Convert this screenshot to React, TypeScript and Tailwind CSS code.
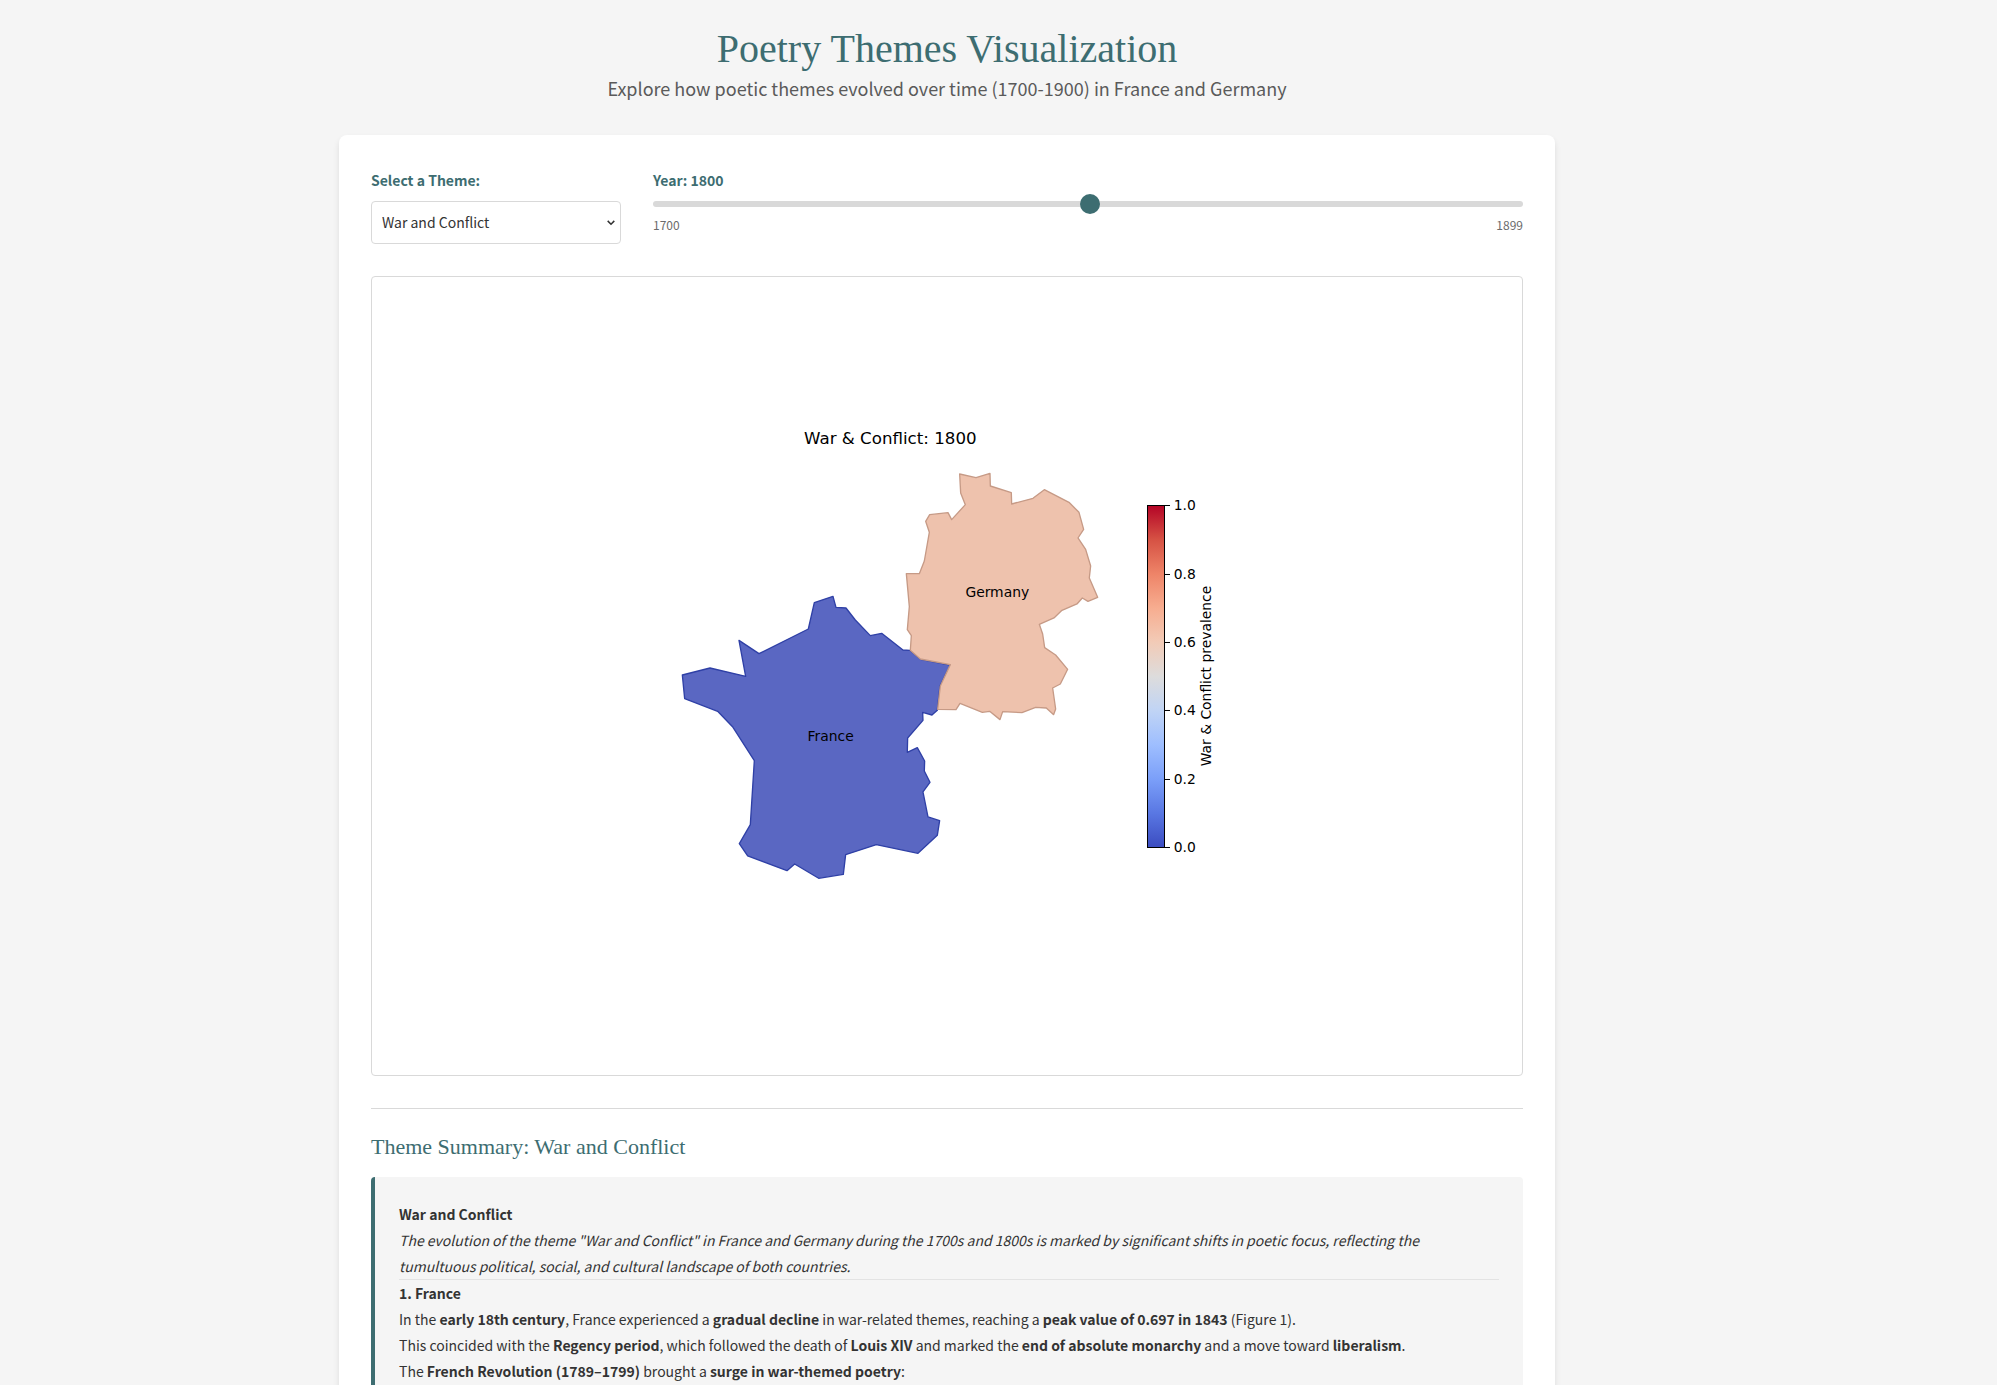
import { useState } from 'react';

const TICKS = [
  { label: '1.0', y: 79 },
  { label: '0.8', y: 148 },
  { label: '0.6', y: 216 },
  { label: '0.4', y: 284 },
  { label: '0.2', y: 353 },
  { label: '0.0', y: 421 },
];

const COOLWARM = [
  '#b40426', '#d65244', '#ee8468', '#f7ad90', '#f2cbb7', '#dddcdc',
  '#c0d4f5', '#9ebeff', '#7b9ff9', '#5977e3', '#3b4cc0',
];

const FRANCE =
  'M519 109 L528 142 L558 144 L586 180 L631 227 L665 220 L729 270 L750 271 L782 298 L871 315 L840 378 L832 451 L816 465 L788 457 L789 481 L743 534 L742 577 L772 563 L794 603 L793 633 L810 667 L789 696 L804 771 L839 782 L832 826 L774 880 L649 854 L557 884 L550 943 L476 955 L404 912 L381 932 L263 888 L238 851 L271 794 L283 602 L219 502 L173 454 L74 416 L67 345 L150 324 L257 349 L237 241 L297 281 L445 207 L463 128 Z';

const GERMANY =
  'M239 42 L288 53 L330 40 L331 78 L394 98 L395 132 L459 115 L493 89 L567 127 L597 157 L611 208 L594 234 L617 268 L632 318 L628 354 L653 412 L624 424 L607 414 L591 432 L546 451 L522 474 L478 493 L488 522 L494 563 L527 585 L563 628 L541 672 L518 684 L527 747 L521 764 L499 744 L467 742 L426 758 L368 755 L360 779 L329 754 L307 757 L240 730 L228 749 L173 748 L181 678 L211 614 L121 597 L91 571 L94 527 L82 509 L88 440 L79 341 L118 341 L133 303 L148 217 L137 184 L149 164 L204 158 L215 179 L256 134 L242 99 Z';

// The drawing is laid out in points (100 dpi); shapes are stored in pixels.
const PT = 0.72;

function ThemeMap() {
  return (
    <svg
      viewBox="0 0 417.6 360"
      className="h-[500px] w-[580px] font-['DejaVu_Sans',sans-serif]"
      role="img"
      aria-label="Theme prevalence map"
    >
      <defs>
        <linearGradient id="coolwarm" x1="0" y1="0" x2="0" y2="1">
          {COOLWARM.map((color, i) => (
            <stop key={color} offset={i / 10} stopColor={color} />
          ))}
        </linearGradient>
      </defs>
      <g transform={`scale(${PT})`}>
        <g strokeLinejoin="round" strokeWidth="4">
          <path d={FRANCE} transform="translate(3 134) scale(0.3333)" fill="#5a67c2" stroke="#2f40a6" />
          <path d={GERMANY} transform="translate(223 34) scale(0.3333)" fill="#eec2ad" stroke="#c69a86" />
        </g>
        <rect x="490.5" y="79.5" width="17" height="342" fill="url(#coolwarm)" stroke="#000" />
        {TICKS.map(({ label, y }) => (
          <path key={label} d={`M508 ${y + 0.5}h5`} stroke="#000" />
        ))}
      </g>
      <text x="168" y="13" textAnchor="middle" fontSize="12">War &amp; Conflict: 1800</text>
      <g fontSize="10">
        <text x="125" y="227" textAnchor="middle">France</text>
        <text x="245" y="123" textAnchor="middle">Germany</text>
        {TICKS.map(({ label, y }) => (
          <text key={label} x="372" y={(y + 5) * PT}>{label}</text>
        ))}
        <text transform="translate(399 180) rotate(-90)" textAnchor="middle">
          War &amp; Conflict prevalence
        </text>
      </g>
    </svg>
  );
}

export default function App() {
  const [year, setYear] = useState(1800);
  return (
    <div className="min-h-screen bg-[#f5f5f5] pr-[103px] font-['Noto_Sans_CJK_SC',sans-serif] text-[14px] leading-[26px] text-[#333]">
      <div className="mx-auto max-w-[1280px] px-8 pt-[25px]">
        <header className="mb-[31px] text-center">
          <h1 className="font-['Liberation_Serif',serif] text-[40px] leading-[48px] text-[#3d6d71]">
            Poetry Themes Visualization
          </h1>
          <p className="text-[18px] leading-[31px] text-[#5a5a5a]">
            Explore how poetic themes evolved over time (1700-1900) in France and Germany
          </p>
        </header>

        <main className="rounded-lg bg-white p-8 shadow-[0_4px_6px_rgba(0,0,0,0.1)]">
          <div className="mb-8 flex gap-8">
            <div className="w-[250px]">
              <label htmlFor="theme" className="mb-2 block font-bold text-[#3d6d71]">Select a Theme:</label>
              <div className="relative">
                <select
                  id="theme"
                  defaultValue="war"
                  className="block h-[43px] w-full appearance-none rounded border border-[#d9d9d9] bg-white px-[10px] pb-[2px] text-[14px]"
                >
                  <option value="war">War and Conflict</option>
                </select>
                <svg
                  viewBox="0 0 8 6"
                  className="pointer-events-none absolute top-[19px] right-[6px] h-[6px] w-2"
                  fill="none"
                  stroke="#333"
                  strokeWidth="1.5"
                  aria-hidden="true"
                >
                  <path d="M0.7 0.9 L4 4.2 L7.3 0.9" />
                </svg>
              </div>
            </div>
            <div className="flex-1">
              <label htmlFor="year" className="mb-2 block font-bold text-[#3d6d71]">Year: {year}</label>
              <input
                id="year"
                type="range"
                min={1700}
                max={1899}
                value={year}
                onChange={(e) => setYear(Number(e.target.value))}
                className="block h-[6px] w-full appearance-none rounded-[3px] bg-[#d9d9d9] [&::-webkit-slider-thumb]:size-5 [&::-webkit-slider-thumb]:appearance-none [&::-webkit-slider-thumb]:rounded-full [&::-webkit-slider-thumb]:bg-[#3d6d71]"
              />
              <div className="mt-2 flex justify-between text-[12px] leading-5 text-[#6b6b6b]">
                <span>1700</span>
                <span>1899</span>
              </div>
            </div>
          </div>

          <div className="flex h-[800px] items-center justify-center rounded border border-[#d9d9d9]">
            <ThemeMap />
          </div>

          <section className="mt-8 border-t border-[#d9d9d9] pt-6">
            <h2 className="mb-4 font-['Liberation_Serif',serif] text-[22px] leading-[28px] text-[#3d6d71]">
              Theme Summary: War and Conflict
            </h2>
            <div className="rounded border-l-4 border-[#3d6d71] bg-[#f5f5f5] p-6">
              <p><strong>War and Conflict</strong></p>
              <p className="max-w-[1060px] italic">
                The evolution of the theme "War and Conflict" in France and Germany during the 1700s and 1800s is marked by significant shifts in poetic focus, reflecting the tumultuous political, social, and cultural landscape of both countries.
              </p>
              <hr className="border-[#e3e3e3]" />
              <p><strong>1. France</strong></p>
              <p>
                In the <strong>early 18th century</strong>, France experienced a <strong>gradual decline</strong> in war-related themes, reaching a <strong>peak value of 0.697 in 1843</strong> (Figure 1).
              </p>
              <p>
                This coincided with the <strong>Regency period</strong>, which followed the death of <strong>Louis XIV</strong> and marked the <strong>end of absolute monarchy</strong> and a move toward <strong>liberalism</strong>.
              </p>
              <p>
                The <strong>French Revolution (1789–1799)</strong> brought a <strong>surge in war-themed poetry</strong>:
              </p>
            </div>
          </section>
        </main>
      </div>
    </div>
  );
}
